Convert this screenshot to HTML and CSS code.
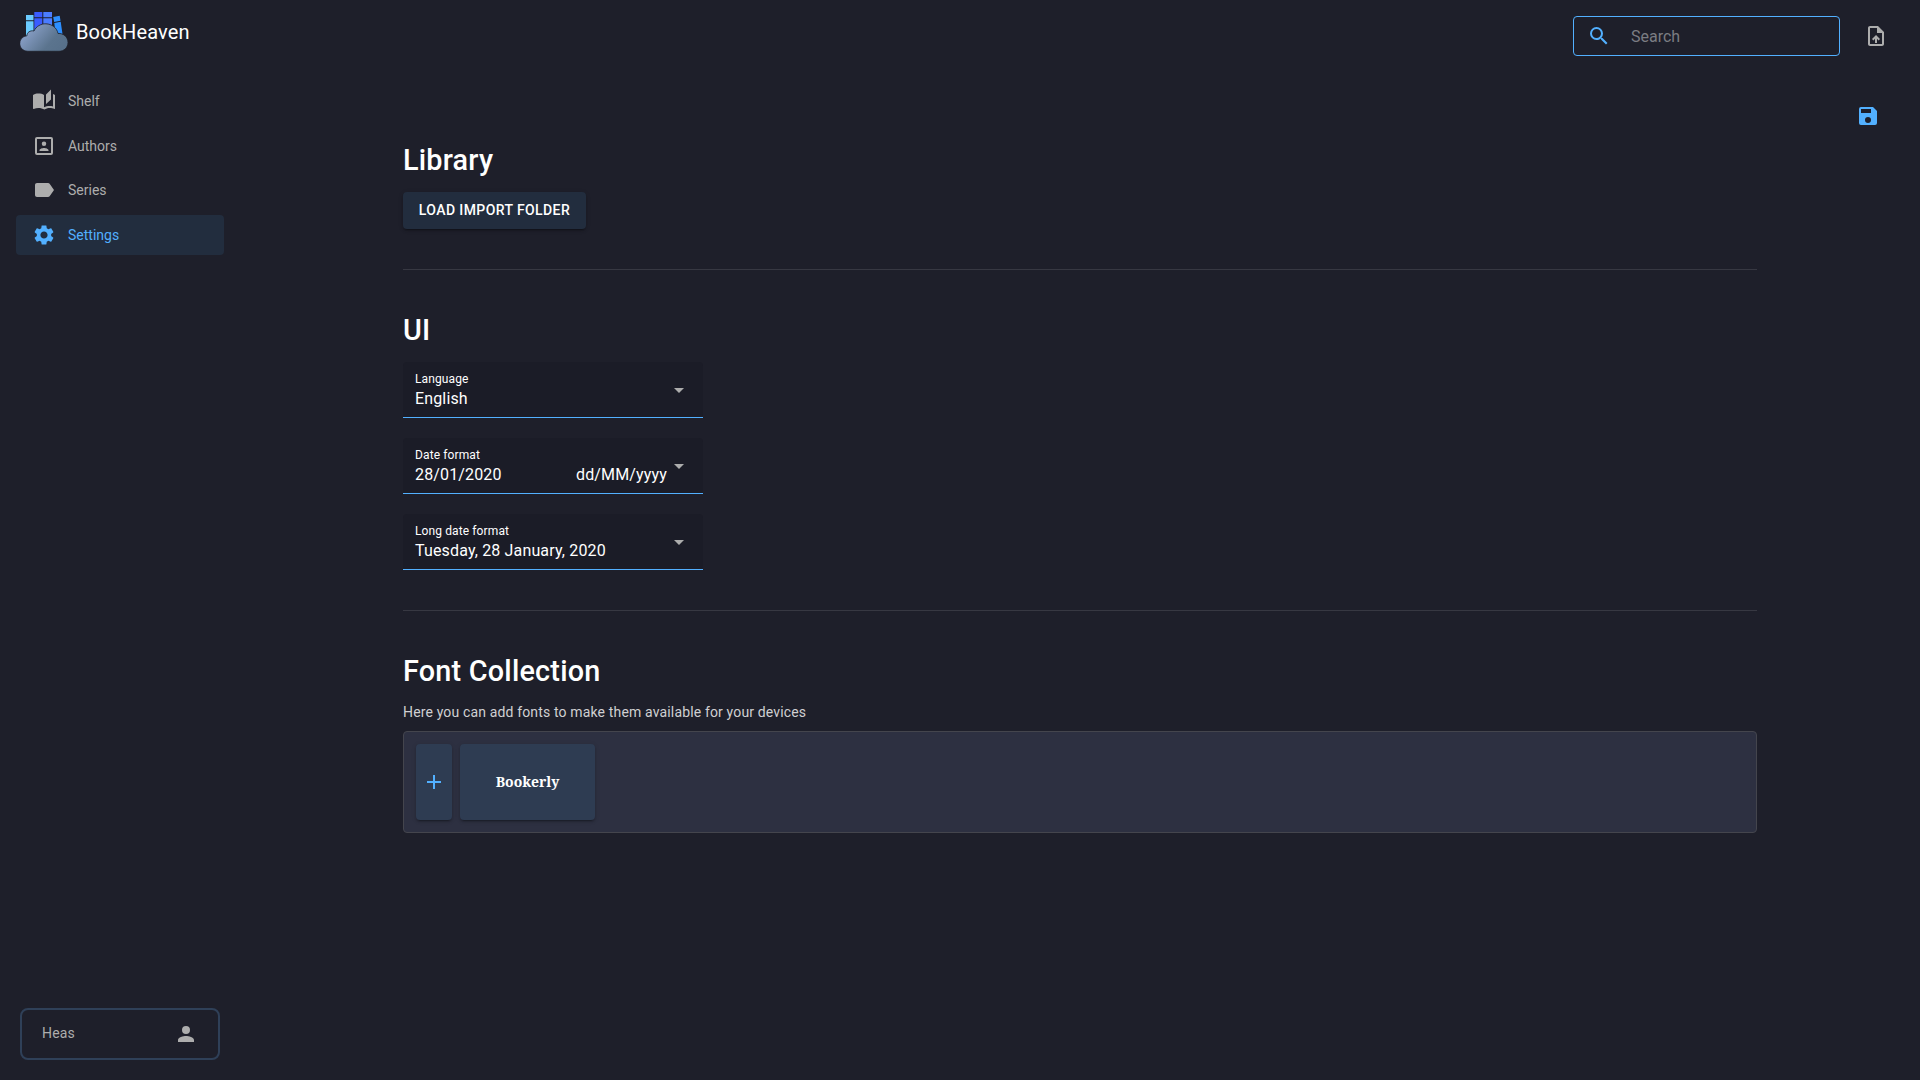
FILE: index.html
```html
<!DOCTYPE html>
<html lang="en">
<head>
<meta charset="utf-8">
<title>BookHeaven</title>
<link rel="stylesheet" href="styles.css">
</head>
<body>
<div class="app">
  <aside class="sidebar">
    <div class="brand">
      <svg class="brand-logo" viewBox="0 0 48 40">
        <defs><linearGradient id="cloud" x1="0" y1="0.2" x2="1" y2="0.7"><stop offset="0" stop-color="#93a9d4"/><stop offset="0.7" stop-color="#5b748e"/><stop offset="1" stop-color="#57708a"/></linearGradient></defs>
        <path fill="#6bcbff" d="M6 3h7.500v5.200H6zM6 9.200h7.500V25H6z"/>
        <path fill="#3a5cff" d="M14.300 0h8v5.300h-8zM14.300 6.200h8v20h-8z"/>
        <path fill="#4b7dff" d="M23.300 0h8.700v5.300h-8.700zM23.300 6.200h8.700v20h-8.700z"/>
        <path fill="#2d8fff" d="M33.200 5l6.500-1.200.8 5-6.300 1.200zM34.300 11l6.400-1.200L42.500 22l-7 1z"/>
        <path fill="url(#cloud)" stroke="#1e1f29" stroke-width=".8" d="M8 39.300a7.800 7.800 0 0 1-1-15.600c-.2-3 3-5.700 7-4.700 2-4.500 7-7.500 12-7.200 6 .2 11 4.200 12 9.700 5.500-.5 10 3.500 10 9 0 5-4 8.800-9 8.800z"/>
      </svg>
      <span class="brand-name">BookHeaven</span>
    </div>
    <nav class="nav">
      <a class="nav-item"><svg class="icon" viewBox="0 0 24 24"><path d="M12.400 20.500c-1.500-.9-3.900-1.500-5.900-1.500-1.600 0-3.300.3-4.800 1.050-.35.100-.7-.15-.7-.5V6c.6-.45 1.250-.75 2-1C4.110 4.650 5.330 4.500 6.500 4.500c1.950 0 4.050.4 5.500 1.500v12.200c1.500-.9 3.600-1.200 5.500-1.200 1.170 0 2.390.15 3.500.5V4.900c.7.250 1.400.6 2 1.100v13.500c0 .35-.3.600-.6.500-1.300-.6-2.900-1-4.900-1-1.800 0-3.600.6-5.100 1.500zM19 .5l-5 5V15l5-4.500z"/></svg><span>Shelf</span></a>
      <a class="nav-item"><svg class="icon" viewBox="0 0 24 24"><path d="M19 3H5a2 2 0 0 0-2 2v14a2 2 0 0 0 2 2h14a2 2 0 0 0 2-2V5a2 2 0 0 0-2-2zm0 16H5V5h14zM12 12a2.250 2.250 0 1 0 0-4.500 2.250 2.250 0 0 0 0 4.500zm4.500 4.250c0-1.500-3-2.250-4.500-2.250s-4.500.75-4.500 2.250V17h9z"/></svg><span>Authors</span></a>
      <a class="nav-item"><svg class="icon" viewBox="0 0 24 24"><path d="M17.630 5.840C17.270 5.330 16.670 5 16 5L5 5.010C3.900 5.010 3 5.900 3 7v10c0 1.100.9 1.990 2 1.990L16 19c.67 0 1.270-.33 1.630-.84L22 12z"/></svg><span>Series</span></a>
      <a class="nav-item nav-item-active"><svg class="icon" viewBox="0 0 24 24"><path d="M19.140 12.940c.04-.3.060-.61.060-.94 0-.32-.02-.64-.07-.94l2.030-1.580c.18-.14.230-.41.120-.61l-1.920-3.320c-.12-.22-.37-.29-.59-.22l-2.390.96c-.5-.38-1.030-.7-1.620-.94l-.36-2.540c-.04-.24-.24-.41-.48-.41h-3.840c-.24 0-.43.17-.47.41l-.36 2.540c-.59.24-1.130.57-1.620.94l-2.390-.96c-.22-.08-.47 0-.59.22L2.740 8.870c-.12.210-.08.470.12.610l2.030 1.580c-.05.300-.09.630-.09.940s.02.640.07.940l-2.030 1.580c-.18.140-.23.410-.12.610l1.920 3.320c.12.220.37.290.59.220l2.390-.96c.5.380 1.030.7 1.620.94l.36 2.540c.05.240.24.410.48.410h3.840c.24 0 .44-.17.47-.41l.36-2.540c.59-.24 1.130-.56 1.620-.94l2.390.96c.22.080.47 0 .59-.22l1.920-3.320c.12-.22.070-.47-.12-.61zM12 15.600c-1.980 0-3.600-1.620-3.600-3.600s1.620-3.600 3.600-3.600 3.600 1.620 3.600 3.600-1.620 3.600-3.600 3.600z"/></svg><span>Settings</span></a>
    </nav>
    <div class="profile">
      <span class="profile-name">Heas</span>
      <svg class="icon" viewBox="0 0 24 24"><path d="M12 12a4 4 0 1 0 0-8 4 4 0 0 0 0 8zm0 2c-2.670 0-8 1.340-8 4v2h16v-2c0-2.660-5.330-4-8-4z"/></svg>
    </div>
  </aside>
  <div class="page">
    <header class="topbar">
      <div class="search">
        <svg class="icon" viewBox="0 0 24 24"><path d="M15.500 14h-.79l-.28-.27A6.471 6.471 0 0 0 16 9.500 6.500 6.500 0 1 0 9.500 16c1.610 0 3.090-.59 4.230-1.570l.27.28v.79l5 4.990L20.490 19zm-6 0C7.010 14 5 11.990 5 9.500S7.010 5 9.500 5 14 7.010 14 9.500 11.990 14 9.500 14z"/></svg>
        <input class="search-input" type="text" placeholder="Search">
      </div>
      <svg class="icon" viewBox="0 0 24 24"><path d="M14 2H6c-1.100 0-1.990.9-1.990 2L4 20c0 1.100.89 2 1.990 2H18c1.100 0 2-.9 2-2V8zm4 18H6V4h7v5h5zM8 15.010l1.410 1.410L11 14.840V19h2v-4.160l1.590 1.590L16 15.010 12.010 11z"/></svg>
    </header>
    <div class="actions">
      <svg class="icon" viewBox="0 0 24 24"><path d="M17 3H5a2 2 0 0 0-2 2v14a2 2 0 0 0 2 2h14a2 2 0 0 0 2-2V7zm-5 16a3 3 0 1 1 0-6 3 3 0 0 1 0 6zm3-10H5V5h10z"/></svg>
    </div>
    <main class="content">
      <section class="section">
        <h2 class="title">Library</h2>
        <button class="button">Load import folder</button>
      </section>
      <hr class="divider">
      <section class="section">
        <h2 class="title">UI</h2>
        <div class="fields">
          <div class="field"><div class="field-body"><span class="label">Language</span><div class="value"><span>English</span></div></div><svg class="icon" viewBox="0 0 24 24"><path d="M7 10l5 5 5-5z"/></svg></div>
          <div class="field"><div class="field-body"><span class="label">Date format</span><div class="value"><span>28/01/2020</span><span>dd/MM/yyyy</span></div></div><svg class="icon" viewBox="0 0 24 24"><path d="M7 10l5 5 5-5z"/></svg></div>
          <div class="field"><div class="field-body"><span class="label">Long date format</span><div class="value"><span>Tuesday, 28 January, 2020</span></div></div><svg class="icon" viewBox="0 0 24 24"><path d="M7 10l5 5 5-5z"/></svg></div>
        </div>
      </section>
      <hr class="divider">
      <section class="section">
        <h2 class="title">Font Collection</h2>
        <p class="hint">Here you can add fonts to make them available for your devices</p>
        <div class="fonts">
          <button class="tile tile-add"><svg class="icon" viewBox="0 0 24 24"><path d="M19 13h-6v6h-2v-6H5v-2h6V5h2v6h6z"/></svg></button>
          <div class="tile tile-font">Bookerly</div>
        </div>
      </section>
    </main>
  </div>
</div>
</body>
</html>
```
FILE: styles.css
```css
* { box-sizing: border-box; }
body {
  margin: 0;
  background: #1e1f2a;
  color: #fff;
  font-family: Roboto, sans-serif;
  font-size: 14px;
}
.app { display: flex; height: 100vh; }
.icon { display: block; flex: none; width: 24px; height: 24px; fill: #adadad; }

.sidebar {
  display: flex;
  flex-direction: column;
  width: 240px;
  padding: 12px 16px 20px;
}
.brand { display: flex; gap: 8px; padding-left: 4px; height: 40px; }
.brand-logo { width: 48px; height: 40px; }
.brand-name { font-size: 20px; line-height: 40px; letter-spacing: .0075em; }
.nav { display: flex; flex-direction: column; gap: 4.500px; margin-top: 29px; }
.nav-item {
  display: flex;
  align-items: center;
  gap: 12px;
  height: 40px;
  padding-left: 16px;
  border-radius: 4px;
  width: 208px;
  color: #adadad;
}
.nav-item-active { background: #222d3e; color: #52b0ff; }
.nav-item-active .icon { fill: #52b0ff; }
.profile {
  display: flex;
  align-items: center;
  justify-content: space-between;
  width: 200px;
  height: 52px;
  margin: auto 0 0 4px;
  padding: 0 20px;
  border: 2px solid #2f4058;
  border-radius: 8px;
  color: #adadad;
}
.profile-name { padding-bottom: 2px; letter-spacing: .01071em; }

.page { flex: 1; min-width: 0; }
.topbar {
  display: flex;
  justify-content: flex-end;
  align-items: center;
  gap: 24px;
  height: 72px;
  padding-right: 32px;
}
.search {
  display: flex;
  align-items: center;
  gap: 20px;
  width: 267px;
  height: 40px;
  padding-left: 13px;
  border: 1px solid #52b0ff;
  border-radius: 4px;
}
.search .icon, .actions .icon, .tile .icon { fill: #52b0ff; }
.search-input {
  width: 180px;
  padding: 0;
  border: 0;
  outline: 0;
  background: none;
  color: #fff;
  font: 16px Roboto, sans-serif;
}
.search-input::placeholder { color: #7b7c82; }
.actions { display: flex; justify-content: flex-end; padding: 32px 40px 0 0; }

.content { width: 1354px; margin: 12px 0 0 163px; }
.title {
  margin: 0;
  font-size: 28.8px;
  font-weight: 500;
  line-height: 40px;
  letter-spacing: .0075em;
}
.button {
  display: block;
  width: 183px;
  height: 37px;
  margin-top: 12px;
  padding: 0 0 1px;
  border: 0;
  border-radius: 4px;
  background: #222d3e;
  color: #fff;
  font: 500 14px Roboto, sans-serif;
  letter-spacing: .4px;
  text-transform: uppercase;
  box-shadow: 0 3px 1px -2px #0003, 0 2px 2px #0002, 0 1px 5px #0002;
}
.divider { height: 1px; margin: 40px 0; border: 0; background: #373842; }
.fields { display: flex; flex-direction: column; gap: 20px; width: 300px; margin-top: 12px; }
.field {
  display: flex;
  align-items: center;
  height: 56px;
  padding: 0 12px;
  border-bottom: 1px solid #52b0ff;
  border-radius: 4px 4px 0 0;
  background: #1b1c27;
}
.field-body { flex: 1; height: 38px; }
.label { display: block; font-size: 12px; line-height: 16px; letter-spacing: .00938em; }
.value {
  display: flex;
  justify-content: space-between;
  font-size: 16px;
  line-height: 24px;
  letter-spacing: .00938em;
}
.hint { margin: 11px 0 8px; color: #d0d0d2; line-height: 21px; letter-spacing: .01071em; }
.fonts {
  display: flex;
  gap: 8px;
  height: 102px;
  padding: 12px;
  border: 1px solid #44454d;
  border-radius: 4px;
  background: #2d3041;
}
.tile {
  display: flex;
  align-items: center;
  justify-content: center;
  border: 0;
  border-radius: 4px;
  background: #2e3c52;
  color: #fff;
  box-shadow: 0 3px 1px -2px #0003, 0 2px 2px #0002, 0 1px 5px #0002;
}
.tile-add { width: 36px; padding: 0; }
.tile-font { width: 135px; padding-bottom: 2px; font: bold 14px "Noto Serif", "DejaVu Serif", serif; }
```
